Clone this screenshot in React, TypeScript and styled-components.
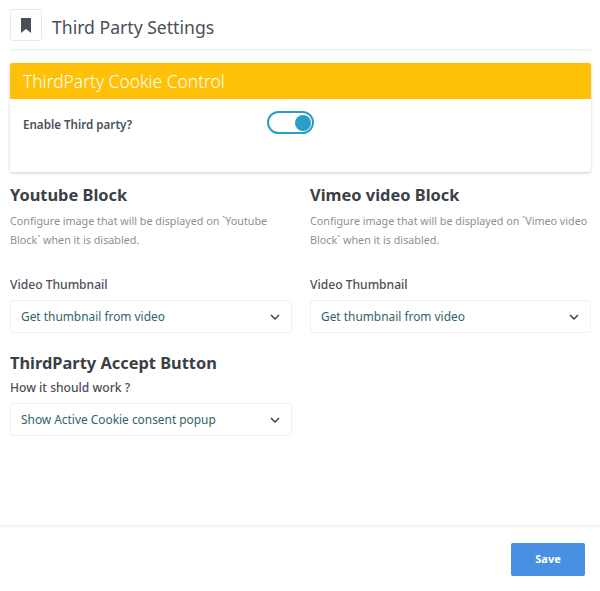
import React from "react";
import styled, { createGlobalStyle } from "styled-components";

const GlobalStyle = createGlobalStyle`
  html, body {
    margin: 0;
    padding: 0;
    background: #fff;
    font-family: "Noto Sans", "Open Sans", sans-serif;
  }
`;

const Page = styled.div`
  width: 600px;
  height: 591px;
  display: flex;
  flex-direction: column;
  box-sizing: border-box;
  overflow: hidden;
`;

const Content = styled.div`
  flex: 1;
  padding: 9px 9px 0 10px;
`;

const Header = styled.div`
  display: flex;
  align-items: center;
  gap: 10px;
  padding-bottom: 8px;
  border-bottom: 2px solid #f1f2f3;
`;

const IconBox = styled.div`
  width: 32px;
  height: 32px;
  box-sizing: border-box;
  border: 1px solid #e6e8ea;
  border-radius: 3px;
  display: flex;
  align-items: center;
  justify-content: center;
`;

const PageTitle = styled.h1`
  margin: 3px 0 0;
  font-size: 17.6px;
  font-weight: 400;
  color: #495057;
`;

const Card = styled.section`
  margin-top: 12px;
  height: 109px;
  border-radius: 2px;
  box-shadow: 0 1px 3px rgba(0, 0, 0, 0.2);
  background: #fff;
`;

const CardHeader = styled.div`
  height: 36px;
  line-height: 36px;
  padding-left: 13px;
  background: #ffc107;
  color: #fff;
  font-size: 17.4px;
  font-weight: 300;
  border-radius: 2px 2px 0 0;
`;

const CardRow = styled.div`
  display: flex;
  align-items: flex-start;
  padding: 12px 13px;
`;

const SwitchLabel = styled.span`
  width: 244px;
  margin-top: 5px;
  font-size: 11.6px;
  line-height: 17px;
  font-weight: 600;
  color: #495057;
`;

const Track = styled.div`
  width: 47px;
  height: 23px;
  box-sizing: border-box;
  border: 2px solid #2a9dc9;
  border-radius: 12px;
  display: flex;
  align-items: center;
  justify-content: flex-end;
  padding-right: 1px;
`;

const Knob = styled.div`
  width: 16px;
  height: 16px;
  border-radius: 50%;
  background: #2a9dc9;
`;

const Columns = styled.div`
  display: grid;
  grid-template-columns: 282px 281px;
  column-gap: 18px;
  margin-top: 12px;
`;

const Column = styled.div`
  min-width: 0;
`;

const BlockTitle = styled.h2`
  margin: 0;
  font-size: 16.4px;
  line-height: 22px;
  font-weight: 700;
  color: #3b3f46;
`;

const Description = styled.p`
  margin: 6px 0 0;
  font-size: 10.75px;
  line-height: 19px;
  color: #8a8f96;
`;

const FieldLabel = styled.label<{ $gap: number }>`
  display: block;
  margin-top: ${(props) => props.$gap}px;
  font-size: 12.1px;
  line-height: 17px;
  font-weight: 500;
  color: #495057;
`;

const Select = styled.div`
  margin-top: 7px;
  height: 33px;
  box-sizing: border-box;
  border: 1px solid #f0f1f3;
  border-radius: 3px;
  display: flex;
  align-items: center;
  justify-content: space-between;
  padding: 0 10px;
  font-size: 11.9px;
  color: #2f6468;
`;

const SelectValue = styled.span`
  margin-top: -2px;
`;

const AcceptBlock = styled.div`
  margin-top: 19px;
  width: 282px;
`;

const Footer = styled.footer`
  height: 66px;
  box-sizing: border-box;
  border-top: 2px solid #f3f4f5;
  display: flex;
  justify-content: flex-end;
  align-items: flex-start;
  padding: 16px 15px 0 0;
`;

const SaveButton = styled.button`
  width: 74px;
  height: 33px;
  border: 0;
  border-radius: 2px;
  padding: 0 0 2px;
  background: #4a90e2;
  color: #fff;
  font-family: inherit;
  font-size: 11px;
  font-weight: 700;
`;

const Chevron = () => (
  <svg width="12" height="12" viewBox="0 0 12 12" fill="none">
    <path d="M2 4l4 4 4-4" stroke="#343a40" strokeWidth="1.4" />
  </svg>
);

const Bookmark = () => (
  <svg width="12" height="15" viewBox="0 0 12 15">
    <path d="M1 0h10v15l-5-4-5 4z" fill="#495057" />
  </svg>
);

function SelectBox({ value }: { value: string }) {
  return (
    <Select>
      <SelectValue>{value}</SelectValue>
      <Chevron />
    </Select>
  );
}

export default function App() {
  return (
    <Page>
      <GlobalStyle />
      <Content>
        <Header>
          <IconBox>
            <Bookmark />
          </IconBox>
          <PageTitle>Third Party Settings</PageTitle>
        </Header>
        <Card>
          <CardHeader>ThirdParty Cookie Control</CardHeader>
          <CardRow>
            <SwitchLabel>Enable Third party?</SwitchLabel>
            <Track>
              <Knob />
            </Track>
          </CardRow>
        </Card>
        <Columns>
          <Column>
            <BlockTitle>Youtube Block</BlockTitle>
            <Description>
              Configure image that will be displayed on `Youtube Block` when it
              is disabled.
            </Description>
            <FieldLabel $gap={26}>Video Thumbnail</FieldLabel>
            <SelectBox value="Get thumbnail from video" />
          </Column>
          <Column>
            <BlockTitle>Vimeo video Block</BlockTitle>
            <Description>
              Configure image that will be displayed on `Vimeo video Block` when
              it is disabled.
            </Description>
            <FieldLabel $gap={26}>Video Thumbnail</FieldLabel>
            <SelectBox value="Get thumbnail from video" />
          </Column>
        </Columns>
        <AcceptBlock>
          <BlockTitle>ThirdParty Accept Button</BlockTitle>
          <FieldLabel $gap={5}>How it should work ?</FieldLabel>
          <SelectBox value="Show Active Cookie consent popup" />
        </AcceptBlock>
      </Content>
      <Footer>
        <SaveButton>Save</SaveButton>
      </Footer>
    </Page>
  );
}
